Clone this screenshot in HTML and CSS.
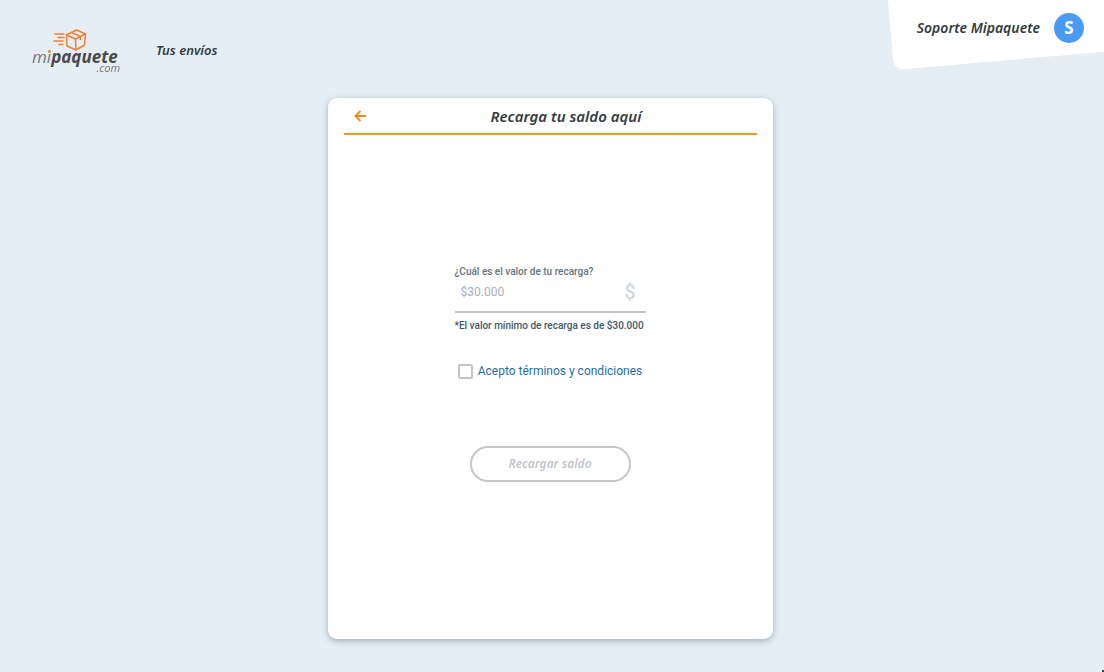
FILE: index.html
```html
<!DOCTYPE html>
<html lang="es">
<head>
    <meta charset="UTF-8">
    <meta name="viewport" content="width=device-width, initial-scale=1.0">
    <title>Recarga tu saldo | mipaquete.com</title>
    <link rel="stylesheet" href="styles.css">
</head>
<body>

    <header class="header">
        <a class="logo" href="#" aria-label="mipaquete.com">
            <svg class="logo-box" width="34" height="22" viewBox="0 0 34 22" fill="none" stroke="#f08030" stroke-width="1.5" stroke-linecap="round" stroke-linejoin="round" aria-hidden="true">
                <path d="M2 5h9M5 8.500h6M1 12h9M6 15.500h4"/>
                <path d="M23.500 1 32.500 5 31.500 16 23 21 14 17 13.500 6z"/>
                <path d="M13.500 6 22.500 10 32.500 5M22.500 10 23 21M18.500 3.500 27.500 7.500v3"/>
            </svg>
            <span class="logo-name"><span class="logo-mi">m<span class="logo-i">ı<span class="logo-dot"></span></span></span>paquete</span>
            <span class="logo-com">.com</span>
        </a>
        <nav class="nav">
            <a href="#">Tus envíos</a>
        </nav>
        <div class="user">
            <span class="user-name">Soporte Mipaquete</span>
            <span class="avatar">S</span>
        </div>
    </header>

    <main class="main">
        <section class="card">
            <div class="card-header">
                <button class="back" type="button" aria-label="Volver">
                    <svg width="12" height="12" viewBox="0 0 12 12" fill="none" stroke="#f5871f" stroke-width="1.8" aria-hidden="true">
                        <path d="M12 6H1.500M6.500 .8 1.300 6l5.200 5.200"/>
                    </svg>
                </button>
                <h1>Recarga tu saldo aquí</h1>
            </div>
            <form class="form">
                <div class="field">
                    <label for="amount">¿Cuál es el valor de tu recarga?</label>
                    <div class="input-row">
                        <input type="text" id="amount" placeholder="$30.000">
                        <span class="currency">$</span>
                    </div>
                    <p class="hint">*El valor mínimo de recarga es de $30.000</p>
                </div>
                <div class="terms">
                    <input type="checkbox" id="terms" aria-labelledby="termsLink">
                    <a href="#" id="termsLink">Acepto términos y condiciones</a>
                </div>
                <button class="submit" type="submit" disabled>Recargar saldo</button>
            </form>
        </section>
    </main>

    <span class="corner"></span>

</body>
</html>
```

FILE: styles.css
```css
* {
    box-sizing: border-box;
}
body {
    font-family: Roboto, sans-serif;
    margin: 0;
    min-height: 100vh;
    display: flex;
    flex-direction: column;
    background-color: #e5eef5;
    color: #343b40;
}
a {
    text-decoration: none;
}
.header {
    display: flex;
    height: 98px;
    padding-left: 32px;
    overflow: hidden;
}
.logo {
    display: flex;
    flex-direction: column;
    width: 88px;
    padding-top: 29px;
    font-family: "Open Sans", sans-serif;
    font-style: italic;
    color: #4a4a49;
}
.logo-box {
    flex: none;
    margin-left: 21px;
}
.logo-name {
    margin-top: -2px;
    font-size: 17px;
    line-height: 16px;
    font-weight: 700;
    white-space: nowrap;
}
.logo-mi {
    font-weight: 400;
    color: #777;
}
.logo-i {
    position: relative;
}
.logo-dot {
    position: absolute;
    top: 5px;
    right: 0;
    width: 3px;
    height: 3px;
    border-radius: 50%;
    background-color: #f08030;
}
.logo-com {
    margin-top: -2px;
    font-size: 11px;
    line-height: 10px;
    text-align: right;
    color: #777;
}
.nav {
    margin-left: 36px;
    padding-top: 40px;
}
.nav a {
    font: italic 600 13px/20px "Noto Sans", sans-serif;
    color: #343b40;
}
.user {
    position: relative;
    display: flex;
    align-items: center;
    gap: 14px;
    height: 56px;
    margin-left: auto;
    padding: 0 20px 0 32px;
}
.user::before {
    content: "";
    position: absolute;
    left: 9px;
    bottom: -14px;
    width: 300px;
    height: 120px;
    border-radius: 10px;
    background-color: #fff;
    transform: rotate(-5deg);
    transform-origin: bottom left;
}
.user-name {
    position: relative;
    font: italic 600 14px/20px "Noto Sans", sans-serif;
}
.avatar {
    position: relative;
    width: 30px;
    height: 30px;
    border-radius: 50%;
    background-color: #4a9af4;
    color: #fff;
    font: 700 17px/30px "Noto Sans", sans-serif;
    text-align: center;
}
.main {
    flex: 1;
    display: flex;
    padding: 0 20px 33px 16px;
}
.card {
    display: flex;
    flex-direction: column;
    width: 100%;
    max-width: 445px;
    margin: 0 auto;
    padding: 0 16px;
    border-radius: 9px;
    background-color: #fff;
    box-shadow: 0 2px 6px rgba(60, 80, 95, 0.4);
}
.card-header {
    display: flex;
    align-items: center;
    height: 37px;
    border-bottom: 2px solid #f39c12;
}
.card-header h1 {
    flex: 1;
    margin: 0;
    font: italic 600 15px/20px "Noto Sans", sans-serif;
    text-align: center;
}
.back {
    display: flex;
    align-items: center;
    justify-content: center;
    width: 32px;
    height: 32px;
    padding: 0;
    border: none;
    background: none;
    cursor: pointer;
}
.form {
    flex: 1;
    display: flex;
    flex-direction: column;
    align-items: center;
    justify-content: center;
    padding-bottom: 27px;
}
.field {
    min-width: 191px;
}
.field label {
    display: block;
    font-size: 10px;
    font-weight: 500;
    line-height: 14px;
    color: #66747e;
}
.input-row {
    display: flex;
    align-items: center;
    height: 34px;
    padding: 0 10px 6px 6px;
    border-bottom: 2px solid #bfc5ca;
}
.input-row input {
    flex: 1;
    width: 100px;
    min-width: 0;
    padding: 0;
    border: none;
    outline: none;
    background: none;
    font: 12px/20px Roboto, sans-serif;
    color: #343b40;
}
.input-row input::placeholder {
    color: #a9b2bb;
}
.currency {
    font-size: 20px;
    font-weight: 500;
    color: #d3d8dd;
}
.hint {
    margin: 6px 0 0;
    font-size: 10px;
    font-weight: 500;
    line-height: 14px;
    color: #42586a;
}
.terms {
    display: flex;
    align-items: center;
    gap: 5px;
    margin-top: 30px;
}
.terms input {
    appearance: none;
    width: 15px;
    height: 15px;
    margin: 0;
    border: 2px solid #c0c5ca;
    border-radius: 2px;
    background-color: #fff;
}
.terms input:checked {
    background-color: #1f6ca8;
}
.terms a {
    font-size: 12px;
    line-height: 16px;
    color: #1f6ca8;
}
.submit {
    width: 161px;
    height: 36px;
    margin-top: 67px;
    border: 2px solid #c3c8cc;
    border-radius: 18px;
    background-color: #fff;
    font: italic 600 12px/16px "Noto Sans", sans-serif;
    color: #c3c6cc;
}
.corner {
    position: fixed;
    right: 0;
    bottom: 0;
    width: 2px;
    height: 2px;
    border-top-left-radius: 1px;
    background-color: #333;
}
```
